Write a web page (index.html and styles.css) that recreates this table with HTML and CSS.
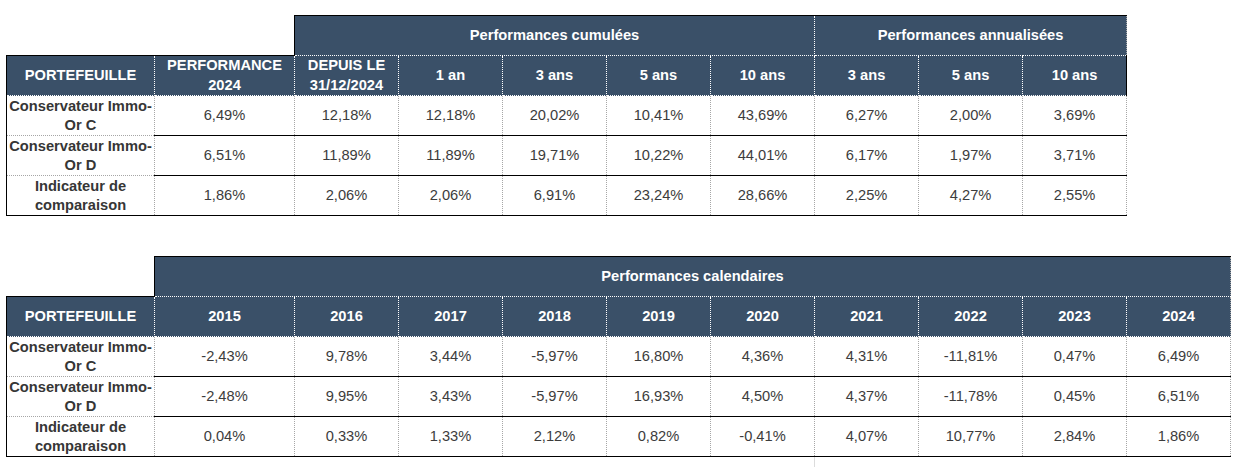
FILE: index.html
```html
<!DOCTYPE html>
<html lang="fr">
<head>
<meta charset="utf-8">
<title>Performances</title>
<link rel="stylesheet" href="styles.css">
</head>
<body>
<div class="page">
  <table class="perf perf-top">
    <colgroup>
      <col class="c-label"><col class="c-wide"><col class="c-n"><col class="c-n"><col class="c-n"><col class="c-n"><col class="c-n"><col class="c-n"><col class="c-n"><col class="c-n">
    </colgroup>
    <tr class="band">
      <td class="blank" colspan="2"></td>
      <th class="h grp grp-first" colspan="5">Performances cumulées</th>
      <th class="h grp grp-last" colspan="3">Performances annualisées</th>
    </tr>
    <tr class="heads">
      <th class="h h-first">PORTEFEUILLE</th>
      <th class="h h-top">PERFORMANCE<br>2024</th>
      <th class="h">DEPUIS LE<br>31/12/2024</th>
      <th class="h">1 an</th>
      <th class="h">3 ans</th>
      <th class="h">5 ans</th>
      <th class="h">10 ans</th>
      <th class="h">3 ans</th>
      <th class="h">5 ans</th>
      <th class="h h-last-solid">10 ans</th>
    </tr>
    <tr class="row row-first">
      <td class="lbl">Conservateur Immo-<br>Or C</td>
      <td class="d">6,49%</td><td class="d">12,18%</td><td class="d">12,18%</td><td class="d">20,02%</td><td class="d">10,41%</td><td class="d">43,69%</td><td class="d">6,27%</td><td class="d">2,00%</td><td class="d">3,69%</td>
    </tr>
    <tr class="row">
      <td class="lbl">Conservateur Immo-<br>Or D</td>
      <td class="d">6,51%</td><td class="d">11,89%</td><td class="d">11,89%</td><td class="d">19,71%</td><td class="d">10,22%</td><td class="d">44,01%</td><td class="d">6,17%</td><td class="d">1,97%</td><td class="d">3,71%</td>
    </tr>
    <tr class="row row-last">
      <td class="lbl">Indicateur de<br>comparaison</td>
      <td class="d">1,86%</td><td class="d">2,06%</td><td class="d">2,06%</td><td class="d">6,91%</td><td class="d">23,24%</td><td class="d">28,66%</td><td class="d">2,25%</td><td class="d">4,27%</td><td class="d">2,55%</td>
    </tr>
  </table>

  <div class="second">
    <table class="perf perf-bottom">
      <colgroup>
        <col class="c-label"><col class="c-wide"><col class="c-n"><col class="c-n"><col class="c-n"><col class="c-n"><col class="c-n"><col class="c-n"><col class="c-n"><col class="c-n"><col class="c-n">
      </colgroup>
      <tr class="band">
        <td class="blank"></td>
        <th class="h grp grp-first grp-last" colspan="10">Performances calendaires</th>
      </tr>
      <tr class="heads">
        <th class="h h-first">PORTEFEUILLE</th>
        <th class="h">2015</th>
        <th class="h">2016</th>
        <th class="h">2017</th>
        <th class="h">2018</th>
        <th class="h">2019</th>
        <th class="h">2020</th>
        <th class="h">2021</th>
        <th class="h">2022</th>
        <th class="h">2023</th>
        <th class="h h-last">2024</th>
      </tr>
      <tr class="row row-first">
        <td class="lbl">Conservateur Immo-<br>Or C</td>
        <td class="d">-2,43%</td><td class="d">9,78%</td><td class="d">3,44%</td><td class="d">-5,97%</td><td class="d">16,80%</td><td class="d">4,36%</td><td class="d">4,31%</td><td class="d">-11,81%</td><td class="d">0,47%</td><td class="d">6,49%</td>
      </tr>
      <tr class="row">
        <td class="lbl">Conservateur Immo-<br>Or D</td>
        <td class="d">-2,48%</td><td class="d">9,95%</td><td class="d">3,43%</td><td class="d">-5,97%</td><td class="d">16,93%</td><td class="d">4,50%</td><td class="d">4,37%</td><td class="d">-11,78%</td><td class="d">0,45%</td><td class="d">6,51%</td>
      </tr>
      <tr class="row row-last">
        <td class="lbl">Indicateur de<br>comparaison</td>
        <td class="d">0,04%</td><td class="d">0,33%</td><td class="d">1,33%</td><td class="d">2,12%</td><td class="d">0,82%</td><td class="d">-0,41%</td><td class="d">4,07%</td><td class="d">10,77%</td><td class="d">2,84%</td><td class="d">1,86%</td>
      </tr>
    </table>
    <div class="gridline"></div>
  </div>
</div>
</body>
</html>
```

FILE: styles.css
```css
html, body {
  margin: 0;
  padding: 0;
  background: #ffffff;
}

body {
  font-family: "Liberation Sans", Arial, sans-serif;
}

.page {
  padding: 15px 0 0 6px;
}

.second {
  margin-top: 40px;
}

.perf {
  border-collapse: collapse;
  table-layout: fixed;
  border: none;
}

.perf-top {
  width: 1120px;
}

.perf-bottom {
  width: 1224px;
}

.c-label { width: 148px; }
.c-wide { width: 140px; }
.c-n { width: 104px; }

.perf th,
.perf td {
  padding: 0;
  height: 39px;
  text-align: center;
  vertical-align: middle;
  font-size: 14.67px;
  line-height: 19px;
}

.heads .h {
  line-height: 19.5px;
}

.blank {
  border: none;
  border-bottom: 1px solid #000;
  background: #fff;
}

.h {
  background: #3a5068;
  color: #ffffff;
  font-weight: bold;
  border: 1px dotted #ffffff;
}

.grp {
  border-top: 1px solid #000;
}

.grp-first {
  border-left: 1px solid #000;
}

.grp-last {
  border-right: 1px dotted #a6a6a6;
}

.h-first {
  border-left: 1px solid #000;
  border-top: 1px solid #000;
}

.h-top {
  border-top: 1px solid #000;
}

.h-last-solid {
  border-right: 1px solid #000;
}

.h-last {
  border-right: 1px dotted #a6a6a6;
}

.lbl {
  font-weight: bold;
  color: #363636;
  border-left: 1px solid #000;
  border-right: 1px dotted #a6a6a6;
  border-top: 1px dotted #a6a6a6;
  border-bottom: 1px dotted #a6a6a6;
}

.d {
  color: #3c3c3c;
  border-left: 1px dotted #a6a6a6;
  border-right: 1px dotted #a6a6a6;
  border-top: 1px solid #000;
  border-bottom: 1px solid #000;
}

.row-first .d,
.row-first .lbl {
  border-top: none;
}

.row-last .lbl,
.row-last .d {
  border-bottom: 1px solid #000;
}

.gridline {
  margin-left: 808px;
  width: 1px;
  height: 12px;
  background: #dcdcdc;
}
```
